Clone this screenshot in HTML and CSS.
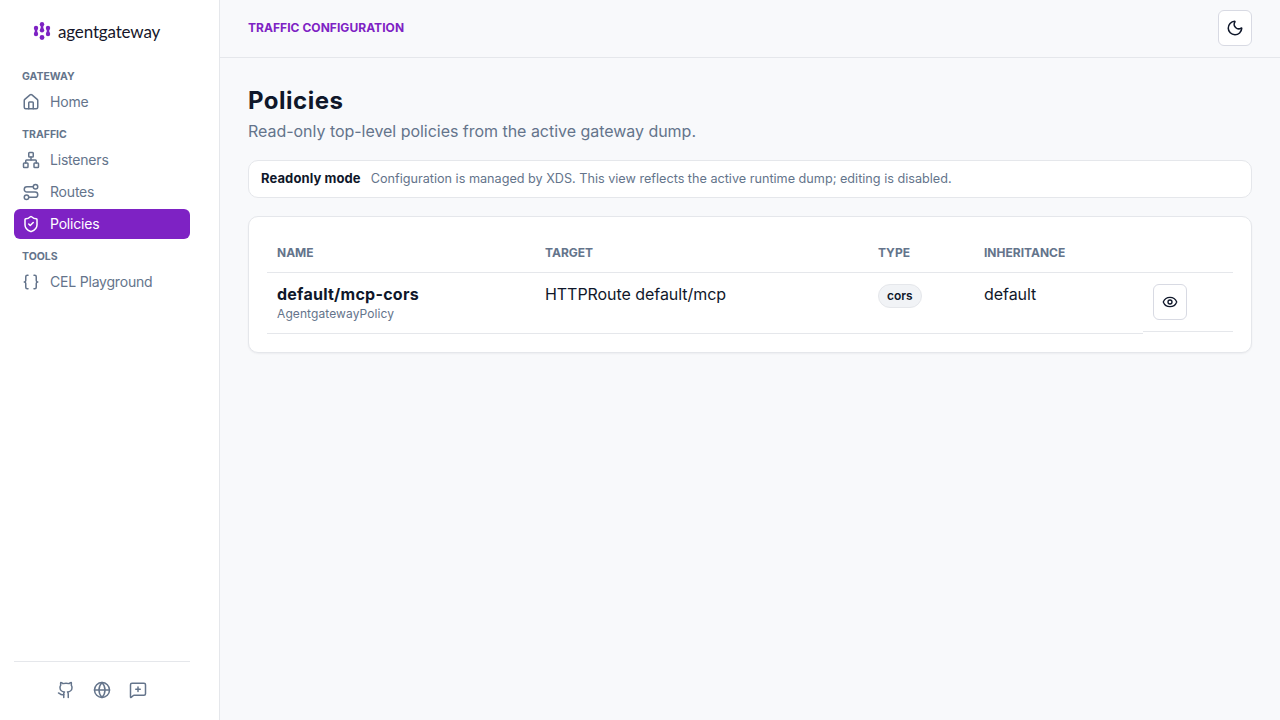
FILE: index.html
```html
<!DOCTYPE html>
<html lang="en">
<head>
    <meta charset="UTF-8">
    <meta name="viewport" content="width=device-width, initial-scale=1.0">
    <title>Policies</title>
    <link rel="stylesheet" href="styles.css">
</head>
<body>
    <div class="layout">
        <aside class="sidebar">
            <div class="logo">
                <svg class="logo-mark" width="18" height="18" viewBox="0 0 18 18" fill="#7e22c4">
                    <circle cx="3" cy="6" r="2.2"/>
                    <rect x="1.700" y="6" width="2.600" height="6"/>
                    <circle cx="3" cy="12" r="2.2"/>
                    <circle cx="9" cy="2.200" r="2.200"/>
                    <rect x="7.700" y="2.200" width="2.600" height="6"/>
                    <circle cx="9" cy="8.200" r="2.200"/>
                    <circle cx="9" cy="15.500" r="2.400"/>
                    <circle cx="15" cy="6" r="2.2"/>
                    <rect x="13.700" y="6" width="2.600" height="6"/>
                    <circle cx="15" cy="12" r="2.2"/>
                </svg>
                <span class="logo-text">agentgateway</span>
            </div>
            <nav class="nav">
                <div class="nav-title">GATEWAY</div>
                <a class="nav-item">
                    <svg class="icon" viewBox="0 0 24 24"><path d="M15 21v-8a1 1 0 0 0-1-1h-4a1 1 0 0 0-1 1v8"/><path d="M3 10a2 2 0 0 1 .709-1.528l7-6a2 2 0 0 1 2.582 0l7 6A2 2 0 0 1 21 10v9a2 2 0 0 1-2 2H5a2 2 0 0 1-2-2z"/></svg>
                    Home
                </a>
                <div class="nav-title">TRAFFIC</div>
                <a class="nav-item">
                    <svg class="icon" viewBox="0 0 24 24"><rect x="16" y="16" width="6" height="6" rx="1"/><rect x="2" y="16" width="6" height="6" rx="1"/><rect x="9" y="2" width="6" height="6" rx="1"/><path d="M5 16v-3a1 1 0 0 1 1-1h12a1 1 0 0 1 1 1v3"/><path d="M12 12V8"/></svg>
                    Listeners
                </a>
                <a class="nav-item">
                    <svg class="icon" viewBox="0 0 24 24"><circle cx="6" cy="19" r="3"/><path d="M9 19h8.5a3.5 3.5 0 0 0 0-7h-11a3.5 3.5 0 0 1 0-7H15"/><circle cx="18" cy="5" r="3"/></svg>
                    Routes
                </a>
                <a class="nav-item active">
                    <svg class="icon" viewBox="0 0 24 24"><path d="M20 13c0 5-3.5 7.5-7.66 8.95a1 1 0 0 1-.67-.01C7.5 20.5 4 18 4 13V6a1 1 0 0 1 1-1c2 0 4.5-1.2 6.24-2.72a1.17 1.17 0 0 1 1.52 0C14.51 3.81 17 5 19 5a1 1 0 0 1 1 1z"/><path d="m9 12 2 2 4-4"/></svg>
                    Policies
                </a>
                <div class="nav-title">TOOLS</div>
                <a class="nav-item">
                    <svg class="icon" viewBox="0 0 24 24"><path d="M8 3H7a2 2 0 0 0-2 2v5a2 2 0 0 1-2 2 2 2 0 0 1 2 2v5c0 1.1.9 2 2 2h1"/><path d="M16 21h1a2 2 0 0 0 2-2v-5c0-1.1.9-2 2-2a2 2 0 0 1-2-2V5a2 2 0 0 0-2-2h-1"/></svg>
                    CEL Playground
                </a>
            </nav>
            <div class="sidebar-footer">
                <svg class="icon" viewBox="0 0 24 24"><path d="M15 22v-4a4.8 4.8 0 0 0-1-3.5c3 0 6-2 6-5.500.08-1.250-.270-2.480-1-3.500.280-1.150.280-2.350 0-3.500 0 0-1 0-3 1.500-2.640-.500-5.360-.500-8 0C6 2 5 2 5 2c-.300 1.150-.300 2.350 0 3.500A5.403 5.403 0 0 0 4 9c0 3.500 3 5.500 6 5.500-.390.490-.680 1.050-.850 1.650-.170.600-.220 1.230-.150 1.850v4"/><path d="M9 18c-4.510 2-5-2-7-2"/></svg>
                <svg class="icon" viewBox="0 0 24 24"><circle cx="12" cy="12" r="10"/><path d="M12 2a14.500 14.500 0 0 0 0 20 14.500 14.500 0 0 0 0-20"/><path d="M2 12h20"/></svg>
                <svg class="icon" viewBox="0 0 24 24"><path d="M22 17a2 2 0 0 1-2 2H6.830a2 2 0 0 0-1.410.590l-2.200 2.200A.71.71 0 0 1 2 21.290V5a2 2 0 0 1 2-2h16a2 2 0 0 1 2 2z"/><path d="M12 8v6"/><path d="M9 11h6"/></svg>
            </div>
        </aside>
        <div class="main">
            <header class="topbar">
                <span class="crumb">TRAFFIC CONFIGURATION</span>
                <button class="icon-btn">
                    <svg class="icon icon-dark" viewBox="0 0 24 24"><path d="M20.985 12.486a9 9 0 1 1-9.473-9.472c.405-.022.617.460.402.803a6 6 0 0 0 8.268 8.268c.344-.215.825-.004.803.401"/></svg>
                </button>
            </header>
            <main class="content">
                <h1>Policies</h1>
                <p class="subtitle">Read-only top-level policies from the active gateway dump.</p>
                <div class="notice">
                    <strong>Readonly mode</strong>
                    <span>Configuration is managed by XDS. This view reflects the active runtime dump; editing is disabled.</span>
                </div>
                <div class="card">
                    <table class="table">
                        <thead>
                            <tr>
                                <th class="col-name">NAME</th>
                                <th class="col-target">TARGET</th>
                                <th class="col-type">TYPE</th>
                                <th class="col-inherit">INHERITANCE</th>
                                <th class="col-actions"></th>
                            </tr>
                        </thead>
                        <tbody>
                            <tr>
                                <td>
                                    <div class="policy-name">default/mcp-cors</div>
                                    <div class="policy-kind">AgentgatewayPolicy</div>
                                </td>
                                <td>HTTPRoute default/mcp</td>
                                <td><span class="badge">cors</span></td>
                                <td>default</td>
                                <td class="actions">
                                    <button class="icon-btn">
                                        <svg class="icon icon-dark icon-sm" viewBox="0 0 24 24"><path d="M2.062 12.348a1 1 0 0 1 0-.696 10.750 10.750 0 0 1 19.876 0 1 1 0 0 1 0 .696 10.750 10.750 0 0 1-19.876 0"/><circle cx="12" cy="12" r="3"/></svg>
                                    </button>
                                </td>
                            </tr>
                        </tbody>
                    </table>
                </div>
            </main>
        </div>
    </div>
</body>
</html>
```
FILE: styles.css
```css
* {
    box-sizing: border-box;
}
body {
    margin: 0;
    font-family: Inter, "Liberation Sans", sans-serif;
    color: #0f172a;
    background: #f8f9fb;
}
.layout {
    display: flex;
    height: 720px;
}

/* sidebar */
.sidebar {
    width: 220px;
    flex-shrink: 0;
    display: flex;
    flex-direction: column;
    padding: 0 29px 0 14px;
    background: #fff;
    border-right: 1px solid #e5e7eb;
}
.logo {
    display: flex;
    align-items: center;
    gap: 7px;
    height: 62px;
    padding-left: 19px;
}
.logo-text {
    font-family: Lato, sans-serif;
    font-size: 17px;
    color: #16162a;
    letter-spacing: -0.15px;
}
.nav {
    flex: 1;
}
.nav-title {
    padding: 1px 8px 0;
    margin-top: 10px;
    margin-bottom: 3px;
    font-size: 10.5px;
    line-height: 14px;
    font-weight: 700;
    color: #64748b;
}
.nav-title:first-child {
    margin-top: 7px;
}
.nav-item {
    display: flex;
    align-items: center;
    gap: 10px;
    height: 30px;
    margin-bottom: 2px;
    padding: 0 8px 1px;
    border-radius: 6px;
    font-size: 14px;
    letter-spacing: -0.2px;
    color: #64748b;
}
.nav-item.active {
    background: #7e22c4;
    color: #fff;
}
.icon {
    width: 18px;
    height: 18px;
    flex-shrink: 0;
    fill: none;
    stroke: currentColor;
    stroke-width: 2;
    stroke-linecap: round;
    stroke-linejoin: round;
}
.icon-dark {
    color: #0f172a;
}
.icon-sm {
    width: 16px;
    height: 16px;
}
.sidebar-footer {
    display: flex;
    justify-content: center;
    gap: 18px;
    height: 59px;
    padding-top: 19px;
    border-top: 1px solid #e5e7eb;
    color: #64748b;
}

/* main */
.main {
    flex: 1;
    display: flex;
    flex-direction: column;
}
.topbar {
    display: flex;
    align-items: center;
    justify-content: space-between;
    height: 58px;
    padding: 0 28px 2px;
    border-bottom: 1px solid #e5e7eb;
}
.crumb {
    font-size: 12px;
    font-weight: 700;
    letter-spacing: 0.05px;
    color: #7e22c4;
}
.icon-btn {
    display: flex;
    align-items: center;
    justify-content: center;
    width: 34px;
    height: 36px;
    padding: 0;
    background: #fff;
    border: 1px solid #d8dae3;
    border-radius: 6px;
}
.content {
    padding: 28px;
}
h1 {
    margin: 0;
    font-size: 24px;
    line-height: 30px;
    font-weight: 700;
    letter-spacing: 0.5px;
}
.subtitle {
    margin: 3px 0 0;
    font-size: 16px;
    line-height: 24px;
    letter-spacing: -0.03px;
    color: #64748b;
}
.notice {
    display: flex;
    align-items: center;
    gap: 10px;
    height: 38px;
    margin-top: 17px;
    padding: 0 12px 2px;
    background: #fff;
    border: 1px solid #e5e7eb;
    border-radius: 10px;
    font-size: 12.65px;
    color: #64748b;
}
.notice strong {
    font-size: 13px;
    letter-spacing: 0.1px;
    color: #0f172a;
}
.card {
    margin-top: 18px;
    padding: 16px 18px 18px;
    background: #fff;
    border: 1px solid #e5e7eb;
    border-radius: 10px;
    box-shadow: 0 1px 2px rgba(15, 23, 42, 0.05);
}

/* table */
.table {
    width: 100%;
    border-collapse: collapse;
    table-layout: fixed;
}
.table th {
    height: 39px;
    padding: 0 10px;
    text-align: left;
    font-size: 12px;
    font-weight: 700;
    color: #64748b;
    border-bottom: 1px solid #e5e7eb;
}
.table td {
    padding: 11px 10px 9px;
    vertical-align: top;
    font-size: 16px;
    line-height: 20px;
    letter-spacing: -0.05px;
    border-bottom: 1px solid #e5e7eb;
}
.table td.actions {
    display: flex;
    padding-bottom: 11px;
}
.col-name {
    width: 268px;
}
.col-target {
    width: 333px;
}
.col-type {
    width: 106px;
}
.col-inherit {
    width: 169px;
}
.policy-name {
    font-weight: 700;
    letter-spacing: 0.25px;
}
.policy-kind {
    font-size: 12px;
    line-height: 20px;
    letter-spacing: 0.1px;
    color: #64748b;
}
.badge {
    display: inline-block;
    padding: 0 8px;
    font-size: 12px;
    line-height: 22px;
    font-weight: 600;
    letter-spacing: 0;
    background: #f1f3f6;
    border: 1px solid #e5e7eb;
    border-radius: 999px;
}
```
